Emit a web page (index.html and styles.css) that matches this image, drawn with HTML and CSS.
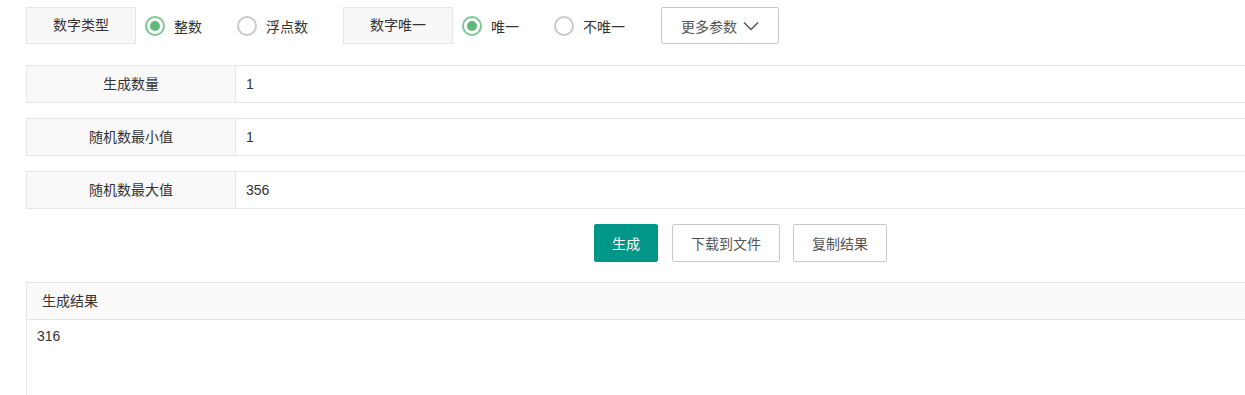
FILE: index.html
```html
<!DOCTYPE html>
<html lang="zh-CN">
<head>
    <meta charset="UTF-8">
    <title>随机数生成</title>
    <link rel="stylesheet" href="styles.css">
</head>
<body>
    <div class="page">
        <div class="options">
            <div class="opt-label">数字类型</div>
            <label class="radio checked"><span class="radio-dot"></span>整数</label>
            <label class="radio"><span class="radio-dot"></span>浮点数</label>

            <div class="opt-label">数字唯一</div>
            <label class="radio checked"><span class="radio-dot"></span>唯一</label>
            <label class="radio"><span class="radio-dot"></span>不唯一</label>

            <button class="more-btn">更多参数
                <svg width="16" height="10" viewBox="0 0 16 10"><path d="M1 1.5 L8 8.5 L15 1.5" fill="none" stroke="#555" stroke-width="1.5"/></svg>
            </button>
        </div>

        <div class="field">
            <div class="field-label">生成数量</div>
            <div class="field-value">1</div>
        </div>
        <div class="field">
            <div class="field-label">随机数最小值</div>
            <div class="field-value">1</div>
        </div>
        <div class="field">
            <div class="field-label">随机数最大值</div>
            <div class="field-value">356</div>
        </div>

        <div class="actions">
            <button class="btn btn-primary">生成</button>
            <button class="btn">下载到文件</button>
            <button class="btn">复制结果</button>
        </div>

        <div class="result">
            <div class="result-head">生成结果</div>
            <div class="result-body">316</div>
        </div>
    </div>
</body>
</html>
```

FILE: styles.css
```css
html {
    overflow: hidden;
}

body {
    margin: 0;
    font-family: "Liberation Sans", "Noto Sans CJK SC", sans-serif;
    font-size: 14px;
    color: #333;
    background: #fff;
}

.page {
    width: 1260px;
    padding: 7px 0 0 26px;
}

.options {
    display: flex;
    align-items: center;
    height: 37px;
}

.opt-label {
    box-sizing: border-box;
    width: 110px;
    height: 37px;
    line-height: 35px;
    text-align: center;
    background: #f8f8f8;
    border: 1px solid #e6e6e6;
    margin-right: 9px;
}

.radio {
    display: flex;
    align-items: center;
    gap: 9px;
    margin-right: 35px;
    cursor: pointer;
}

.radio:last-of-type {
    margin-right: 36px;
}

.radio-dot {
    box-sizing: border-box;
    width: 20px;
    height: 20px;
    border: 2px solid #c9c9c9;
    border-radius: 50%;
    display: flex;
    align-items: center;
    justify-content: center;
}

.radio.checked .radio-dot {
    border-color: #7cc794;
}

.radio.checked .radio-dot::after {
    content: "";
    width: 10px;
    height: 10px;
    border-radius: 50%;
    background: #5fb878;
}

.more-btn {
    box-sizing: border-box;
    width: 118px;
    height: 37px;
    border: 1px solid #c9c9c9;
    border-radius: 2px;
    background: #fff;
    color: #555;
    font: inherit;
    display: flex;
    align-items: center;
    justify-content: center;
    gap: 6px;
    padding: 0;
}

.field {
    display: flex;
    box-sizing: border-box;
    height: 38px;
    border: 1px solid #e6e6e6;
    border-right: none;
    margin-top: 15px;
}

.options + .field {
    margin-top: 21px;
}

.field-label {
    width: 208px;
    background: #f9f9f9;
    border-right: 1px solid #e6e6e6;
    text-align: center;
    line-height: 36px;
}

.field-value {
    flex: 1;
    padding-left: 10px;
    line-height: 36px;
}

.actions {
    display: flex;
    gap: 13px;
    margin: 15px 0 0 568px;
}

.btn {
    box-sizing: border-box;
    height: 38px;
    padding: 0 18px;
    border: 1px solid #c9c9c9;
    border-radius: 2px;
    background: #fff;
    color: #555;
    font: inherit;
    cursor: pointer;
}

.btn-primary {
    width: 64px;
    padding: 0;
    margin-right: 1px;
    border-color: #009688;
    background: #009688;
    color: #fff;
}

.result {
    margin-top: 20px;
    border: 1px solid #e6e6e6;
    border-right: none;
    border-bottom: none;
    height: 140px;
}

.result-head {
    height: 36px;
    line-height: 36px;
    padding-left: 15px;
    background: #fafafa;
    border-bottom: 1px solid #e6e6e6;
}

.result-body {
    padding: 6px 10px;
    line-height: 20px;
}
```
